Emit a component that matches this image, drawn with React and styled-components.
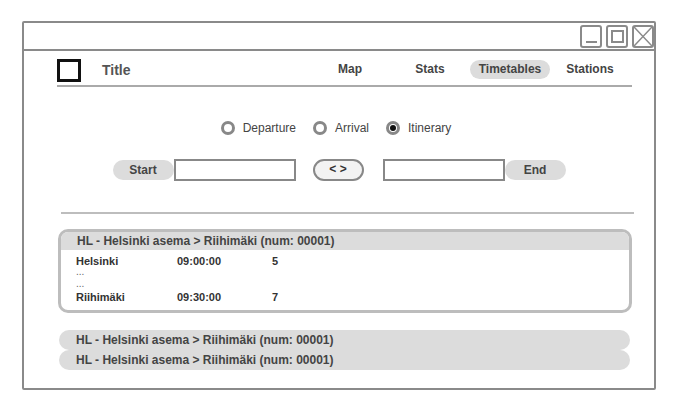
import React from 'react'
import styled, { createGlobalStyle } from 'styled-components'

const GlobalStyle = createGlobalStyle`
  body {
    margin: 0;
    background: #fff;
    font-family: "Liberation Sans", Arial, sans-serif;
  }
`

const Page = styled.div`
  padding: 21px 20px 0 22px;
`

const Frame = styled.div`
  width: 634px;
  height: 369px;
  box-sizing: border-box;
  border: 2px solid #8a8a8a;
  border-radius: 2px;
  display: flex;
  flex-direction: column;
`

const TitleBar = styled.div`
  height: 26px;
  border-bottom: 2px solid #8a8a8a;
  display: flex;
  justify-content: flex-end;
  align-items: center;
  gap: 4px;
`

const WinButton = styled.div`
  width: 22px;
  height: 23px;
  box-sizing: border-box;
  border: 2px solid #8a8a8a;
  border-radius: 3px;
  display: flex;
  align-items: center;
  justify-content: center;
`

const Header = styled.div`
  margin: 7px 22px 0 33px;
  height: 27px;
  border-bottom: 2px solid #aaa;
  display: flex;
  align-items: center;
`

const Logo = styled.div`
  width: 24px;
  height: 23px;
  box-sizing: border-box;
  border: 3px solid #111;
  margin-top: -2px;
`

const Title = styled.div`
  margin-left: 21px;
  font-size: 14px;
  font-weight: bold;
  color: #555;
  margin-top: -4px;
`

const Nav = styled.nav`
  margin-left: auto;
  display: flex;
  margin-right: 2px;
  margin-top: -4px;
`

const NavItem = styled.div`
  width: 80px;
  height: 19px;
  line-height: 19px;
  text-align: center;
  font-size: 12px;
  font-weight: bold;
  color: #444;
  border-radius: 10px;
  background: ${p => (p.$active ? '#dcdcdc' : 'transparent')};
`

const RadioRow = styled.div`
  margin-top: 33px;
  display: flex;
  justify-content: center;
  align-items: center;
  gap: 17px;
  padding-right: 6px;
  height: 16px;
`

const RadioItem = styled.label`
  display: flex;
  align-items: center;
  gap: 8px;
  font-size: 12px;
  color: #444;
`

const RadioDot = styled.span`
  width: 14px;
  height: 14px;
  box-sizing: border-box;
  border-radius: 50%;
  border: 3px solid #888;
  background: #fff;
  display: flex;
  align-items: center;
  justify-content: center;

  &::after {
    content: '';
    width: 6px;
    height: 6px;
    border-radius: 50%;
    background: ${p => (p.$checked ? '#111' : 'transparent')};
  }
`

const SearchRow = styled.div`
  margin-top: 23px;
  display: flex;
  justify-content: center;
  align-items: center;
`

const Pill = styled.div`
  width: 61px;
  height: 20px;
  line-height: 20px;
  text-align: center;
  background: #dcdcdc;
  border-radius: 10px;
  font-size: 12px;
  font-weight: bold;
  color: #444;
`

const TextBox = styled.div`
  width: 122px;
  height: 22px;
  box-sizing: border-box;
  border: 2px solid #888;
  background: #fff;
`

const SwapButton = styled.div`
  width: 51px;
  height: 22px;
  box-sizing: border-box;
  border: 2px solid #888;
  border-radius: 11px;
  background: #f3f3f3;
  margin: 0 19px 0 17px;
  text-align: center;
  line-height: 17px;
  font-size: 12px;
  font-weight: bold;
  color: #333;
`

const Divider = styled.div`
  margin: 31px 20px 0 37px;
  height: 2px;
  background: #bdbdbd;
`

const Card = styled.div`
  margin: 15px 22px 0 34px;
  border: 3px solid #bdbdbd;
  border-radius: 10px;
  overflow: hidden;
`

const RouteHeader = styled.div`
  height: ${p => (p.$collapsed ? 20 : 18)}px;
  line-height: ${p => (p.$collapsed ? 20 : 18)}px;
  background: #dcdcdc;
  padding-left: ${p => (p.$collapsed ? 17 : 16)}px;
  font-size: 12px;
  font-weight: bold;
  color: #444;
  border-radius: ${p => (p.$collapsed ? '10px' : '0')};
`

const CardBody = styled.div`
  padding: 5px 0 7px 15px;
`

const StopRow = styled.div`
  display: grid;
  grid-template-columns: 101px 95px 40px;
  height: 12px;
  line-height: 12px;
  font-size: 11px;
  font-weight: bold;
  color: #333;
`

const Dots = styled.div`
  height: 12px;
  line-height: 9px;
  font-size: 10px;
  color: #666;
`

const RouteList = styled.div`
  margin: 17px 24px 0 35px;
  display: flex;
  flex-direction: column;
`

const stops = [
  { name: 'Helsinki', time: '09:00:00', track: '5' },
  { name: 'Riihimäki', time: '09:30:00', track: '7' }
]

const routeTitle = 'HL - Helsinki asema > Riihimäki (num: 00001)'

export default function App() {
  return (
    <Page>
      <GlobalStyle />
      <Frame>
        <TitleBar>
          <WinButton>
            <svg width="13" height="17" viewBox="0 0 13 17">
              <line x1="1" y1="14" x2="12" y2="14" stroke="#8a8a8a" strokeWidth="2" />
            </svg>
          </WinButton>
          <WinButton>
            <svg width="13" height="13" viewBox="0 0 13 13">
              <rect x="1" y="1" width="11" height="11" fill="none" stroke="#8a8a8a" strokeWidth="2" />
            </svg>
          </WinButton>
          <WinButton>
            <svg width="18" height="19" viewBox="0 0 18 19">
              <line x1="0" y1="0" x2="18" y2="19" stroke="#8a8a8a" strokeWidth="1.5" />
              <line x1="18" y1="0" x2="0" y2="19" stroke="#8a8a8a" strokeWidth="1.5" />
            </svg>
          </WinButton>
        </TitleBar>

        <Header>
          <Logo />
          <Title>Title</Title>
          <Nav>
            <NavItem>Map</NavItem>
            <NavItem>Stats</NavItem>
            <NavItem $active>Timetables</NavItem>
            <NavItem>Stations</NavItem>
          </Nav>
        </Header>

        <RadioRow>
          <RadioItem><RadioDot />Departure</RadioItem>
          <RadioItem><RadioDot />Arrival</RadioItem>
          <RadioItem><RadioDot $checked />Itinerary</RadioItem>
        </RadioRow>

        <SearchRow>
          <Pill>Start</Pill>
          <TextBox />
          <SwapButton>&lt; &gt;</SwapButton>
          <TextBox />
          <Pill>End</Pill>
        </SearchRow>

        <Divider />

        <Card>
          <RouteHeader>{routeTitle}</RouteHeader>
          <CardBody>
            <StopRow>
              <span>{stops[0].name}</span>
              <span>{stops[0].time}</span>
              <span>{stops[0].track}</span>
            </StopRow>
            <Dots>...</Dots>
            <Dots>...</Dots>
            <StopRow>
              <span>{stops[1].name}</span>
              <span>{stops[1].time}</span>
              <span>{stops[1].track}</span>
            </StopRow>
          </CardBody>
        </Card>

        <RouteList>
          <RouteHeader $collapsed>{routeTitle}</RouteHeader>
          <RouteHeader $collapsed>{routeTitle}</RouteHeader>
        </RouteList>
      </Frame>
    </Page>
  )
}
